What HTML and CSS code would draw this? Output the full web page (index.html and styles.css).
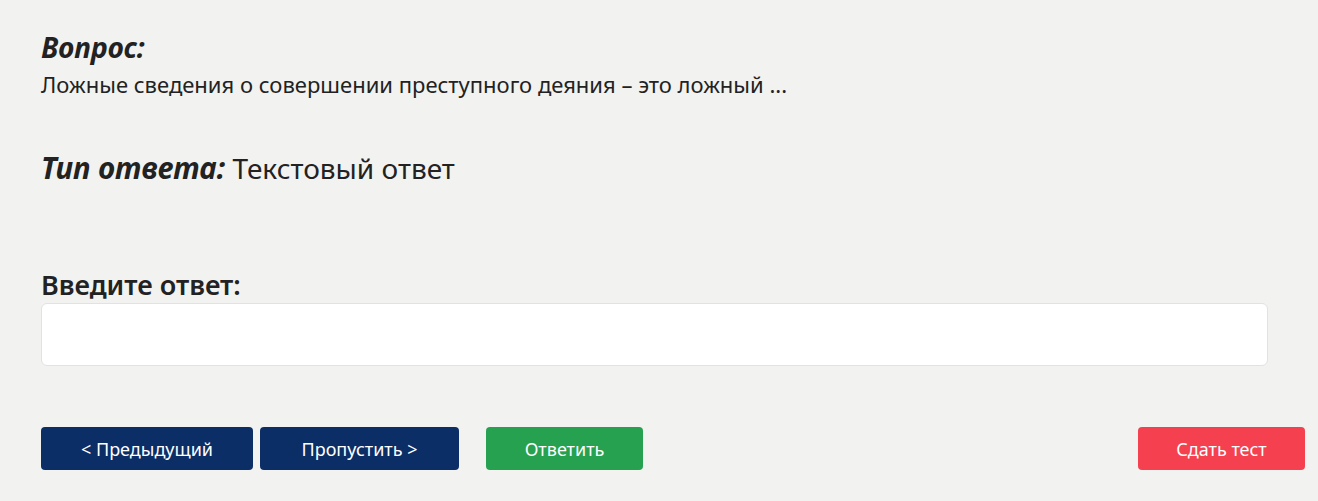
FILE: index.html
```html
<!DOCTYPE html>
<html lang="ru">
<head>
  <meta charset="UTF-8">
  <title>Тест</title>
  <link rel="stylesheet" href="styles.css">
</head>
<body>

<div class="question">
  <h2 class="label">Вопрос:</h2>
  <p class="question-text">Ложные сведения о совершении преступного деяния – это ложный ...</p>
</div>

<div class="answer-type">
  <span class="label">Тип ответа:</span> Текстовый ответ
</div>

<div class="answer">
  <label for="answerInput">Введите ответ:</label>
  <input type="text" id="answerInput">
</div>

<div class="buttons">
  <button class="btn btn-nav btn-prev">&lt; Предыдущий</button>
  <button class="btn btn-nav btn-skip">Пропустить &gt;</button>
  <button class="btn btn-answer">Ответить</button>
  <button class="btn btn-finish">Сдать тест</button>
</div>

</body>
</html>
```

FILE: styles.css
```css
body {
  font-family: 'Noto Sans', 'Open Sans', sans-serif;
  background-color: #f2f2f1;
  margin: 0;
  padding: 30px 13px 0 41px;
  color: #222;
}

.label {
  font-style: italic;
  font-weight: bold;
}

.question h2 {
  font-size: 28px;
  margin: 0;
  line-height: 34px;
}

.question-text {
  font-size: 22px;
  margin: 6px 0 0;
  line-height: 28px;
}

.answer-type {
  margin-top: 50px;
  font-size: 28px;
  line-height: 40px;
}

.answer-type .label {
  font-size: 29.5px;
}

.answer {
  margin-top: 78px;
  width: 1227px;
}

.answer label {
  display: block;
  font-size: 27px;
  font-weight: 600;
  line-height: 37px;
}

.answer input {
  display: block;
  width: 100%;
  box-sizing: border-box;
  height: 63px;
  border: 1px solid #e2e2e0;
  border-radius: 6px;
  background-color: #fff;
  font-size: 18px;
  padding: 0 12px;
}

.buttons {
  display: flex;
  margin-top: 61px;
  width: 1264px;
}

.btn {
  height: 43px;
  border: none;
  border-radius: 4px;
  color: #fff;
  font-family: 'Noto Sans', 'Open Sans', sans-serif;
  font-size: 18px;
  cursor: pointer;
}

.btn-nav {
  background-color: #0c2e66;
}

.btn-prev {
  width: 212px;
  margin-right: 7px;
}

.btn-skip {
  width: 199px;
  margin-right: 27px;
}

.btn-answer {
  width: 157px;
  background-color: #26a150;
}

.btn-finish {
  width: 167px;
  margin-left: auto;
  background-color: #f5404f;
}
```
